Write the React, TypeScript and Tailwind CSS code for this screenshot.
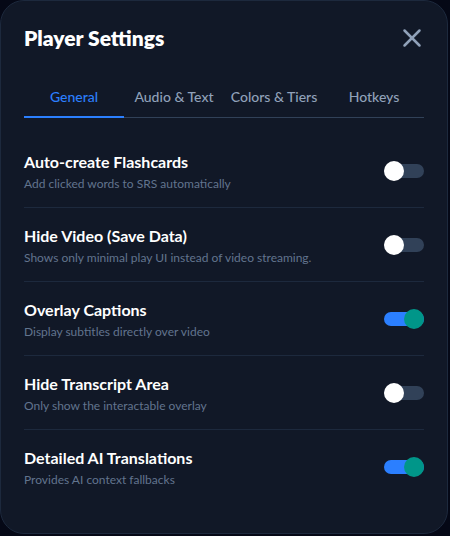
import { X } from "lucide-react";
import { useState } from "react";

const tabs = ["General", "Audio & Text", "Colors & Tiers", "Hotkeys"];

const settings = [
  { title: "Auto-create Flashcards", desc: "Add clicked words to SRS automatically", on: false },
  { title: "Hide Video (Save Data)", desc: "Shows only minimal play UI instead of video streaming.", on: false },
  { title: "Overlay Captions", desc: "Display subtitles directly over video", on: true },
  { title: "Hide Transcript Area", desc: "Only show the interactable overlay", on: false },
  { title: "Detailed AI Translations", desc: "Provides AI context fallbacks", on: true },
];

const Toggle = ({ on, onClick }: { on: boolean; onClick: () => void }) => (
  <button onClick={onClick} className="relative w-10 h-5 shrink-0 flex items-center">
    <span className={`block w-10 h-3.5 rounded-full ${on ? "bg-blue-500" : "bg-slate-700"}`} />
    <span
      className={`absolute top-0 w-5 h-5 rounded-full ${on ? "left-5 bg-teal-600" : "left-0 bg-white"}`}
    />
  </button>
);

export default function App() {
  const [active, setActive] = useState(0);
  const [values, setValues] = useState(settings.map((s) => s.on));

  return (
    <div className="min-h-screen bg-[#050816] font-['Lato',sans-serif]">
      <div className="w-[448px] h-[534px] rounded-3xl border border-slate-800 bg-[#111827] px-[23px] pt-[23px]">
        <div className="flex items-center justify-between h-7">
          <h2 className="text-[21px] font-extrabold text-white">Player Settings</h2>
          <button className="w-[30px] h-[30px] -mr-[3px] flex items-center justify-center text-slate-400">
            <X size={30} strokeWidth={2} />
          </button>
        </div>

        <div className="mt-6 grid grid-cols-4 border-b border-slate-700">
          {tabs.map((t, i) => (
            <button
              key={t}
              onClick={() => setActive(i)}
              className={`pt-[11px] pb-[9px] -mb-px border-b-2 text-sm font-medium ${
                i === active ? "border-blue-500 text-blue-500" : "border-transparent text-slate-400"
              }`}
            >
              {t}
            </button>
          ))}
        </div>

        <div className="mt-4 flex flex-col divide-y divide-slate-800">
          {settings.map((s, i) => (
            <div key={s.title} className="flex items-center justify-between pt-4 pb-[15px]">
              <div>
                <div className="text-base font-bold text-white leading-6">{s.title}</div>
                <div className="mt-0.5 text-xs text-slate-500 leading-4">{s.desc}</div>
              </div>
              <Toggle
                on={values[i]}
                onClick={() => setValues(values.map((v, j) => (j === i ? !v : v)))}
              />
            </div>
          ))}
        </div>
      </div>
    </div>
  );
}
